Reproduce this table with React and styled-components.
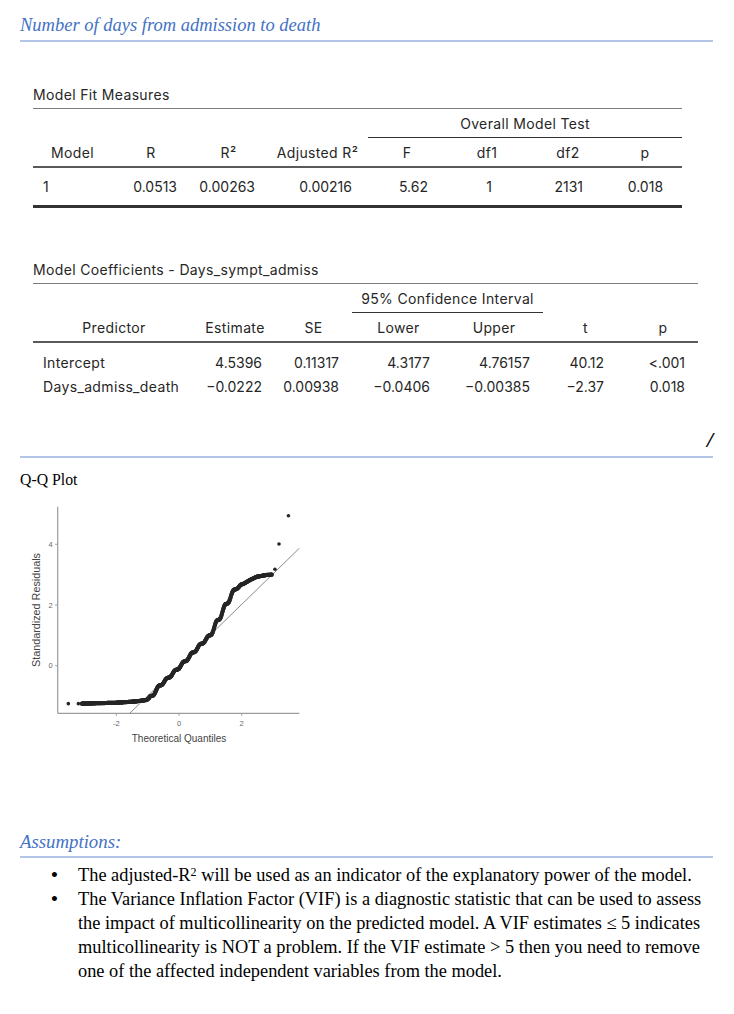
import React from "react";
import styled, { createGlobalStyle } from "styled-components";

const GlobalStyle = createGlobalStyle`
  html, body { margin: 0; padding: 0; background: #ffffff; }
  body { font-family: "Liberation Serif", "Times New Roman", serif; }
`;

const Page = styled.div`
  width: 734px;
  box-sizing: border-box;
  padding: 14px 21px 20px 20px;
`;

const BlueHeading = styled.div`
  font-family: "Liberation Serif", "Times New Roman", serif;
  font-style: italic;
  font-size: ${(p) => p.$size || 18.5}px;
  line-height: 22px;
  color: #4472c4;
  padding-bottom: ${(p) => p.$pb || 4}px;
  border-bottom: 2px solid #b4c6e7;
  margin-top: ${(p) => p.$mt || 0}px;
`;

const TableSection = styled.section`
  padding-left: 13px;
  margin-top: ${(p) => p.$mt}px;
  font-family: Inter, "Liberation Sans", sans-serif;
  font-size: 14px;
  color: #262626;
  letter-spacing: 0.35px;
`;

const TableTitle = styled.div`
  line-height: 18px;
  margin-bottom: 4px;
`;

const Table = styled.table`
  width: ${(p) => p.$w}px;
  table-layout: fixed;
  border-collapse: separate;
  border-spacing: 0;
  border-top: 1px solid #7c7c7c;
`;

const Col = styled.col`
  width: ${(p) => p.$w}px;
`;

const SpanCell = styled.td`
  height: 28px;
  padding: 0;
  text-align: center;
  vertical-align: middle;
  border-bottom: ${(p) => (p.$line ? "1px solid #333333" : "none")};
`;

const HeadCell = styled.th`
  height: 28px;
  padding: 0;
  font-weight: 400;
  text-align: center;
  vertical-align: middle;
  border-bottom: 2px solid #595959;
  white-space: nowrap;
`;

const DataCell = styled.td`
  height: ${(p) => p.$h}px;
  padding: ${(p) => p.$pt || 0}px ${(p) => p.$pr || 0}px 0 ${(p) => p.$pl || 0}px;
  text-align: ${(p) => p.$align || "right"};
  letter-spacing: ${(p) => (p.$align === "left" ? "0.35px" : "0")};
  vertical-align: middle;
  white-space: nowrap;
  border-bottom: ${(p) => (p.$bottom ? "3px solid #333333" : "none")};
`;

const SlashRule = styled.div`
  margin-top: 32px;
  line-height: 20px;
  height: 20px;
  text-align: right;
  font-family: "Liberation Serif", "Times New Roman", serif;
  font-style: italic;
  font-weight: 700;
  font-size: 22px;
  color: #000;
  padding-bottom: 6px;
  padding-right: 0;
  border-bottom: 2px solid #b4c6e7;
`;

const PlotLabel = styled.div`
  margin-top: 13px;
  line-height: 18px;
  font-family: "Liberation Serif", "Times New Roman", serif;
  font-size: 15.8px;
  color: #000;
`;

const PlotSvg = styled.svg`
  display: block;
  margin-top: 11px;
`;

const List = styled.ul`
  list-style: none;
  margin: 5px 0 0;
  padding: 0;
  font-family: "Liberation Serif", "Times New Roman", serif;
  font-size: 18.35px;
  line-height: 24px;
  color: #000;
`;

const Item = styled.li`
  display: flex;
`;

const Bullet = styled.span`
  flex: 0 0 58px;
  box-sizing: border-box;
  text-align: right;
  padding-right: 20px;
  font-size: 21px;
`;

const ItemText = styled.span`
  flex: 1;
  sup {
    font-size: 12px;
    line-height: 0;
    vertical-align: 5px;
  }
`;

/* ---------- data ---------- */

const fitCols = [
  { w: 79, head: "Model", align: "left", pl: 10 },
  { w: 78, head: "R", pr: 13 },
  { w: 77, head: "R²", pr: 12 },
  { w: 101, head: "Adjusted R²", pr: 16 },
  { w: 78, head: "F", pr: 18 },
  { w: 82, head: "df1", pr: 36 },
  { w: 80, head: "df2", pr: 25 },
  { w: 74, head: "p", pr: 19 },
];
const fitRow = ["1", "0.0513", "0.00263", "0.00216", "5.62", "1", "2131", "0.018"];

const coefCols = [
  { w: 162, head: "Predictor", align: "left", pl: 10 },
  { w: 80, head: "Estimate", pr: 13 },
  { w: 77, head: "SE", pr: 13 },
  { w: 93, head: "Lower", pr: 15 },
  { w: 98, head: "Upper", pr: 13 },
  { w: 85, head: "t", pr: 24 },
  { w: 70, head: "p", pr: 13 },
];
const coefRows = [
  ["Intercept", "4.5396", "0.11317", "4.3177", "4.76157", "40.12", "<.001"],
  ["Days_admiss_death", "\u22120.0222", "0.00938", "\u22120.0406", "\u22120.00385", "\u22122.37", "0.018"],
];

/* ---------- Q-Q plot geometry ---------- */

const X0 = 159;
const SX = 31.35;
const Y0 = 165.7;
const SY = 30.35;
const px = (x) => X0 + SX * x;
const py = (y) => Y0 - SY * y;

const keys = [
  [-3.1, -1.25], [-2.0, -1.22], [-1.4, -1.18], [-1.03, -1.13], [-0.87, -1.0],
  [-0.61, -0.66], [-0.34, -0.4], [-0.07, -0.13], [0.19, 0.14], [0.46, 0.44],
  [0.72, 0.72], [0.99, 1.0], [1.25, 1.5], [1.52, 2.04], [1.79, 2.52],
  [2.0, 2.66], [2.26, 2.82], [2.48, 2.93], [2.8, 2.99], [2.96, 3.0],
];

function base(x) {
  if (x <= keys[0][0]) return keys[0][1];
  for (let i = 1; i < keys.length; i++) {
    const [x1, y1] = keys[i];
    const [x0, y0] = keys[i - 1];
    if (x <= x1) return y0 + ((y1 - y0) * (x - x0)) / (x1 - x0);
  }
  return keys[keys.length - 1][1];
}

function curveY(x) {
  if (x > -0.95 && x < 2.05) {
    const P = 0.265;
    const xs = x - (0.9 * P * Math.sin((2 * Math.PI * (x + 0.07)) / P)) / (2 * Math.PI);
    return base(xs);
  }
  return base(x);
}

const curvePts = [];
for (let x = -3.1; x <= 2.96; x += 0.01) {
  curvePts.push([px(x), py(curveY(x))]);
}
const lonePts = [
  [-3.53, -1.25], [-3.21, -1.25], [3.06, 3.18], [3.19, 4.01], [3.49, 4.94],
].map(([x, y]) => [px(x), py(y)]);

function QQPlot() {
  const axisBottom = 213.3;
  const axisLeft = 37.7;
  return (
    <PlotSvg width="310" height="250" viewBox="0 0 310 250">
      <line x1={axisLeft} y1="6.7" x2={axisLeft} y2={axisBottom} stroke="#9c9c9c" strokeWidth="1.2" />
      <line x1={axisLeft} y1={axisBottom} x2="279.3" y2={axisBottom} stroke="#9c9c9c" strokeWidth="1.2" />
      {[4, 2, 0].map((v) => (
        <g key={`y${v}`}>
          <line x1={axisLeft - 2.5} y1={py(v)} x2={axisLeft} y2={py(v)} stroke="#9c9c9c" strokeWidth="1" />
          <text x={axisLeft - 5} y={py(v) + 2.6} textAnchor="end" fontSize="7.5" fill="#666" fontFamily="Liberation Sans, Arial, sans-serif">
            {v}
          </text>
        </g>
      ))}
      {[-2, 0, 2].map((v) => (
        <g key={`x${v}`}>
          <line x1={px(v)} y1={axisBottom} x2={px(v)} y2={axisBottom + 2.5} stroke="#9c9c9c" strokeWidth="1" />
          <text x={px(v)} y="225.5" textAnchor="middle" fontSize="7.5" fill="#666" fontFamily="Liberation Sans, Arial, sans-serif">
            {v}
          </text>
        </g>
      ))}
      <line x1={px(-1.57)} y1={axisBottom} x2="279.3" y2="48.3" stroke="#8a8a8a" strokeWidth="1" />
      {curvePts.map(([x, y], i) => (
        <circle key={i} cx={x} cy={y} r="2.1" fill="#262626" />
      ))}
      {lonePts.map(([x, y], i) => (
        <circle key={`l${i}`} cx={x} cy={y} r="1.8" fill="#262626" />
      ))}
      <text x="159" y="241.8" textAnchor="middle" fontSize="10" fill="#444" fontFamily="Liberation Sans, Arial, sans-serif">
        Theoretical Quantiles
      </text>
      <text
        x="0"
        y="0"
        transform="translate(20.3 110) rotate(-90)"
        textAnchor="middle"
        fontSize="10.8"
        fill="#444"
        fontFamily="Liberation Sans, Arial, sans-serif"
      >
        Standardized Residuals
      </text>
    </PlotSvg>
  );
}

function FitTable() {
  return (
    <TableSection $mt={44}>
      <TableTitle>Model Fit Measures</TableTitle>
      <Table $w={649}>
        <colgroup>
          {fitCols.map((c, i) => (
            <Col key={i} $w={c.w} />
          ))}
        </colgroup>
        <thead>
          <tr>
            <SpanCell colSpan={4} />
            <SpanCell colSpan={4} $line>
              Overall Model Test
            </SpanCell>
          </tr>
          <tr>
            {fitCols.map((c, i) => (
              <HeadCell key={i}>{c.head}</HeadCell>
            ))}
          </tr>
        </thead>
        <tbody>
          <tr>
            {fitRow.map((v, i) => (
              <DataCell key={i} $h={37} $align={fitCols[i].align} $pl={fitCols[i].pl} $pr={fitCols[i].pr} $bottom>
                {v}
              </DataCell>
            ))}
          </tr>
        </tbody>
      </Table>
    </TableSection>
  );
}

function CoefTable() {
  return (
    <TableSection $mt={53}>
      <TableTitle>Model Coefficients - Days_sympt_admiss</TableTitle>
      <Table $w={665}>
        <colgroup>
          {coefCols.map((c, i) => (
            <Col key={i} $w={c.w} />
          ))}
        </colgroup>
        <thead>
          <tr>
            <SpanCell colSpan={3} />
            <SpanCell colSpan={2} $line>
              95% Confidence Interval
            </SpanCell>
            <SpanCell colSpan={2} />
          </tr>
          <tr>
            {coefCols.map((c, i) => (
              <HeadCell key={i}>{c.head}</HeadCell>
            ))}
          </tr>
        </thead>
        <tbody>
          {coefRows.map((row, r) => (
            <tr key={r}>
              {row.map((v, i) => (
                <DataCell
                  key={i}
                  $h={24}
                  $pt={r === 0 ? 7 : 0}
                  $align={coefCols[i].align}
                  $pl={coefCols[i].pl}
                  $pr={coefCols[i].pr}
                >
                  {v}
                </DataCell>
              ))}
            </tr>
          ))}
        </tbody>
      </Table>
    </TableSection>
  );
}

export default function App() {
  return (
    <>
      <GlobalStyle />
      <Page>
        <BlueHeading>Number of days from admission to death</BlueHeading>
        <FitTable />
        <CoefTable />
        <SlashRule>/</SlashRule>
        <PlotLabel>Q-Q Plot</PlotLabel>
        <QQPlot />
        <BlueHeading $mt={81} $size={18.8} $pb={3}>
          Assumptions:
        </BlueHeading>
        <List>
          <Item>
            <Bullet>•</Bullet>
            <ItemText>
              The adjusted-R<sup>2</sup> will be used as an indicator of the explanatory power of the model.
            </ItemText>
          </Item>
          <Item>
            <Bullet>•</Bullet>
            <ItemText>
              The Variance Inflation Factor (VIF) is a diagnostic statistic that can be used to assess the
              impact of multicollinearity on the predicted model. A VIF estimates ≤ 5 indicates
              multicollinearity is NOT a problem. If the VIF estimate &gt; 5 then you need to remove one of
              the affected independent variables from the model.
            </ItemText>
          </Item>
        </List>
      </Page>
    </>
  );
}
